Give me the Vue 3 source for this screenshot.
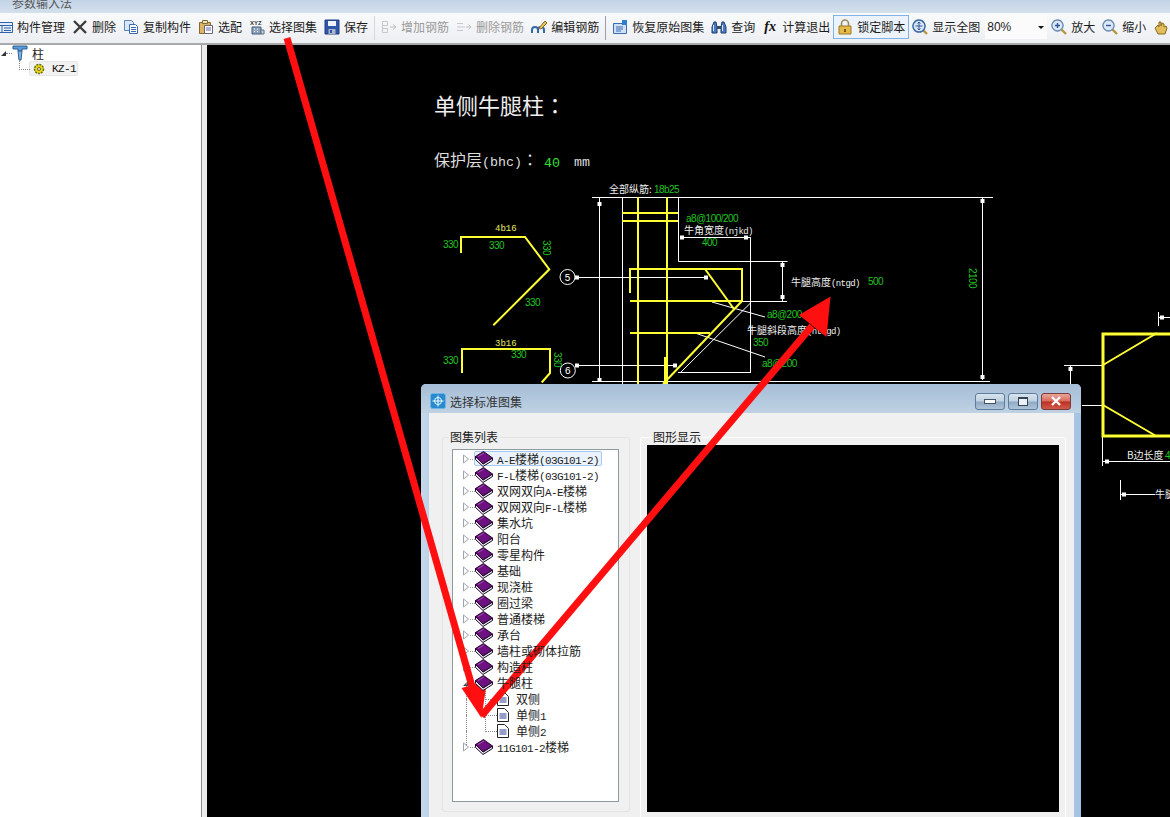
<script setup>
const blue = '#2f62a8'
const icons = {
  mgr: [{ d: 'M0.5 3.5h15v10h-15z', f: '#e4edf8', s: blue }, { d: 'M0.5 6.5h15M5 6.5v7M7 9h7M7 11.5h7', s: blue }],
  del: [{ d: 'M2 2L14 14M14 2L2 14', s: '#3c3c3c', w: 2.4 }],
  copy: [{ d: 'M1.5 1.5h7l2 2v8h-9z', f: '#dbe7f6', s: '#5b84bd' }, { d: 'M6.5 5.5h6l2 2v7h-8z', f: '#fff', s: '#3c6cb0' }, { d: 'M8 8.5h5M8 10.5h5M8 12.5h5', s: '#3c6cb0' }],
  match: [{ d: 'M1.5 3.5h11v11h-11z', f: '#d9b565', s: '#8a6a2a' }, { d: 'M4.5 1.5h5v3h-5z', f: '#efe3b8', s: '#7d6a35' }, { d: 'M6.5 6.5h8v8h-8z', f: '#fff', s: '#667' }, { d: 'M8 9h5M8 11h5', s: '#66a' }],
  xyz: [{ d: 'M3 8h9v7H3z', f: '#8ea3bd', s: '#4a5d78' }, { d: 'M5 10h1M8 10h1M5 12.500h1M8 12.500h1', s: '#fff' }, { d: 'M12 11h3v4h-3z', f: '#c7d3e2', s: '#5c6d85' }],
  save: [{ d: 'M1 1h14v14H1z', f: '#2f55a8', s: '#1e3c80' }, { d: 'M4 2h8v5H4z', f: '#eef3fb' }, { d: 'M4.500 10h7v5h-7z', f: '#aab6c8' }, { d: 'M6 11h2v3H6z', f: '#2f55a8' }],
  addbar: [{ d: 'M1.500 2.500h5v4h-5M1.500 9.500h5v4h-5M1.500 2.500v11', s: '#c8c8c8' }, { d: 'M9 8h6M12 5.500L15 8l-3 2.500', s: '#c0c0c0' }],
  delbar: [{ d: 'M1 4.500h6M1 8h8M1 11.500h6', s: '#c8c8c8' }, { d: 'M10 8h5M12.500 5.500L15 8l-2.500 2.500', s: '#c0c0c0' }],
  edit: [{ d: 'M1 14v-3q0-3 3-3t3 3v3M7 14v-3q0-3 3-3t3 3v3', s: '#3566a8', w: 2 }, { d: 'M8 9L14 2l2 2-6 6z', f: '#e9c452', s: '#8a6a20' }],
  restore: [{ d: 'M1.500 4.500h13v10h-13z', f: '#cfe0f4', s: '#3c6cb0' }, { d: 'M4 8h7M4 10h7M4 12h5', s: '#3c6cb0' }, { d: 'M10 1h5v5h-5z', f: '#2f7fd0' }],
  find: [{ d: 'M1 14V8l2-5h2l1 5v6zM10 14V8l1-5h2l2 5v6z', f: '#4a7cc6', s: '#1d3c75' }, { d: 'M6 7h4v3H6z', f: '#3a4a60' }, { d: 'M2.500 6v6M11.500 6v6', s: '#d6e6fa' }],
  lock: [{ d: 'M4.500 7V4.500a3.500 3.500 0 0 1 7 0V7', s: '#9a8a5a', w: 1.6 }, { d: 'M2 7h12v8H2z', f: '#e6b94a', s: '#9b7a24' }, { d: 'M7 10h2v3H7z', f: '#7a5c16' }],
  full: [{ d: 'M11 11l4 4', s: '#b8963c', w: 2.4 }, { d: 'M7 1a6 6 0 1 0 .01 0z', f: '#dbe8f7', s: '#3e6aa8', w: 1.5 }, { d: 'M7 3.500v7M3.500 7h7M5.500 4.500L7 3l1.500 1.500M5.500 9.500L7 11l1.500-1.500', s: '#2f55a0' }],
  zin: [{ d: 'M10.500 10.500l4.500 4.500', s: '#b8963c', w: 2.4 }, { d: 'M6.500 1a5.500 5.500 0 1 0 .01 0z', f: '#dbe8f7', s: '#6d8cb0', w: 1.4 }, { d: 'M4 6.500h5M6.500 4v5', s: '#2f55a0', w: 1.4 }],
  zout: [{ d: 'M10.500 10.500l4.500 4.500', s: '#b8963c', w: 2.4 }, { d: 'M6.500 1a5.500 5.500 0 1 0 .01 0z', f: '#dbe8f7', s: '#6d8cb0', w: 1.4 }, { d: 'M4 6.500h5', s: '#2f55a0', w: 1.4 }],
  pan: [{ d: 'M2 9l3-3 1 2V3h2v4l1-3 2 1v3l2-1 1 2-2 6H5z', f: '#e2bd5c', s: '#8a6a20' }]
}

const tools = [
  { icon: 'mgr', text: '构件管理', first: true },
  { icon: 'del', text: '删除' },
  { icon: 'copy', text: '复制构件' },
  { icon: 'match', text: '选配' },
  { icon: 'xyz', text: '选择图集', caption: 'XYZ' },
  { icon: 'save', text: '保存' },
  { sep: true },
  { icon: 'addbar', text: '增加钢筋', off: true },
  { icon: 'delbar', text: '删除钢筋', off: true },
  { icon: 'edit', text: '编辑钢筋' },
  { sep: true, dark: true },
  { icon: 'restore', text: '恢复原始图集' },
  { icon: 'find', text: '查询' },
  { text: '计算退出', fx: true },
  { icon: 'lock', text: '锁定脚本', active: true },
  { icon: 'full', text: '显示全图' },
  { combo: true },
  { icon: 'zin', text: '放大' },
  { icon: 'zout', text: '缩小' },
  { icon: 'pan', text: '' }
]

const rows = [
  { text: 'A-E楼梯(03G101-2)', sel: true },
  { text: 'F-L楼梯(03G101-2)' },
  { text: '双网双向A-E楼梯' },
  { text: '双网双向F-L楼梯' },
  { text: '集水坑' },
  { text: '阳台' },
  { text: '零星构件' },
  { text: '基础' },
  { text: '现浇桩' },
  { text: '圈过梁' },
  { text: '普通楼梯' },
  { text: '承台' },
  { text: '墙柱或砌体拉筋' },
  { text: '构造柱' },
  { text: '牛腿柱', open: true },
  { text: '双侧', child: true },
  { text: '单侧1', child: true },
  { text: '单侧2', child: true, last: true },
  { text: '11G101-2楼梯' }
]

const parts = s => s.split(/([\x00-\x7f]+)/).filter(Boolean).map(t => ({ t, latin: /^[\x00-\x7f]/.test(t) }))

const yellow = [
  'M461 253V237H525L549.300 269.300L493.300 325.300',
  'M462 373V349H550V373L541.700 382.500',
  'M638 197V385M667 197V385',
  'M622 213H678M622 221H678',
  'M630 293V269H742V301H630',
  'M705 269L734 309',
  'M630 333H710',
  'M742 301L663 384',
  'M665 357V385'
]
const white = [
  'M592 197.500H993',
  'M599.500 197V382',
  'M592 381.500H990',
  'M982.500 197V380',
  'M622.500 197V384M678.500 197V261.500H787.500',
  'M680 237.500H751M750.500 237V373M678 372.500H750.500M750.500 303L680 373',
  'M782.500 261V301M742 301.500H787',
  'M576 277.500H706M576 365.500H675',
  'M712 302L765 317M695 333L765 357',
  'M1064 365.500H1103M1070.500 365V385M1082 405.500H1103',
  'M1102.500 437V466M1103 461.500H1170',
  'M1158.500 312V326M1158 317.500H1170',
  'M1120.500 480V500M1120 494.500H1155'
]
const ticks = [
  [599.5, 204], [599.5, 380], [982.5, 201], [982.5, 377], [682, 237.5], [746, 237.5],
  [782.5, 265], [782.5, 297], [706, 277.5], [675, 365.5], [577, 277.5], [577, 365.5],
  [1070.5, 369], [1107, 461.5], [1162, 317.5], [1124, 494.5]
]
const green = [
  { x: 443, y: 248, t: '330' }, { x: 489, y: 249, t: '330' }, { x: 525, y: 306, t: '330' },
  { x: 443, y: 364, t: '330' }, { x: 511, y: 358, t: '330' },
  { x: 702, y: 246, t: '400' }, { x: 868, y: 285, t: '500' }, { x: 753, y: 346, t: '350' },
  { x: 654, y: 193, t: '18b25' }, { x: 686, y: 222, t: 'a8@100/200' },
  { x: 767, y: 318, t: 'a8@200' }, { x: 762, y: 367, t: 'a8@200' }, { x: 1165, y: 459, t: '4' }
]
const notes = [
  { x: 609, y: 193, cn: '全部纵筋:', en: '' },
  { x: 684, y: 233.500, cn: '牛角宽度', en: '(njkd)' },
  { x: 791, y: 286, cn: '牛腿高度', en: '(ntgd)' },
  { x: 747, y: 334, cn: '牛腿斜段高度', en: '(ntxgd)' },
  { x: 1127, y: 459, cn: 'B边长度', en: '' },
  { x: 1155, y: 498, cn: '牛腿', en: '' }
]
</script>

<template>
  <div class="page">
    <div class="titlebar"><span class="title-text">参数输入法</span></div>

    <div class="toolbar">
      <template v-for="(t, i) in tools" :key="i">
        <span v-if="t.sep" class="sep" :class="{ dark: t.dark }"></span>
        <div v-else-if="t.combo" class="combo"><span>80%</span><i class="combo-arrow"></i></div>
        <div v-else class="tool" :class="{ off: t.off, active: t.active, first: t.first }">
          <span v-if="t.fx" class="fx">fx</span>
          <svg v-else class="ico" viewBox="0 0 16 16" width="16" height="16">
            <text v-if="t.caption" x="1" y="6" class="xyz">{{ t.caption }}</text>
            <path v-for="(p, j) in icons[t.icon]" :key="j" :d="p.d" :fill="p.f || 'none'" :stroke="p.s || 'none'" :stroke-width="p.w || 1" />
          </svg>
          <span v-if="t.text">{{ t.text }}</span>
        </div>
      </template>
    </div>

    <div class="main">
      <aside class="side">
        <div class="side-row">
          <i class="side-exp"></i>
          <i class="side-dots"></i>
          <svg class="side-ico" viewBox="0 0 16 16" width="16" height="16">
            <path d="M1 1h14v3H10v2H6V4H1z" fill="#5b9bd5" stroke="#2b5f93" />
            <path d="M6 6h4l-1 9H7z" fill="#7fb4e2" stroke="#2b5f93" />
          </svg>
          <span class="side-text">柱</span>
        </div>
        <div class="side-child">
          <div class="side-sel">
            <svg viewBox="0 0 14 14" width="14" height="14">
              <circle cx="7" cy="7" r="4.500" fill="#e8d71a" stroke="#6a6a10" stroke-width="1.500" stroke-dasharray="2 1" />
              <circle cx="7" cy="7" r="1.500" fill="#fff" stroke="#6a6a10" />
            </svg>
            <span class="kz">KZ-1</span>
          </div>
        </div>
      </aside>
      <div class="split"></div>

      <div class="canvas">
        <svg class="cad" viewBox="207 45 963 772" width="963" height="772">
          <text x="434" y="114" class="h1">单侧牛腿柱<tspan class="tc">：</tspan></text>
          <text x="434" y="166" class="h2">保护层<tspan class="h2en">(bhc)</tspan><tspan class="tc">：</tspan></text>
          <text x="544" y="167" class="h2g">40</text>
          <text x="574" y="166" class="h2en">mm</text>

          <path v-for="(d, i) in white" :key="'w' + i" :d="d" class="ln-w" />
          <path v-for="(d, i) in yellow" :key="'y' + i" :d="d" class="ln-y" />
          <rect x="1103" y="334" width="80" height="102" class="ln-y thick" />
          <path d="M1103 365L1157 333M1103 405L1157 436.500" class="ln-y" />
          <rect v-for="(p, i) in ticks" :key="'t' + i" :x="p[0] - 2" :y="p[1] - 2" width="4" height="4" fill="#fff" />

          <circle cx="567.500" cy="277" r="7.500" class="ring" />
          <circle cx="567.800" cy="370.500" r="7.500" class="ring" />
          <text x="567.500" y="280.500" class="ring-t">5</text>
          <text x="567.800" y="374" class="ring-t">6</text>

          <text x="495" y="231" class="lab-y">4b16</text>
          <text x="495" y="346" class="lab-y">3b16</text>
          <text v-for="(g, i) in green" :key="'g' + i" :x="g.x" :y="g.y" class="lab-g">{{ g.t }}</text>
          <text class="lab-g" transform="translate(543 240) rotate(90)">330</text>
          <text class="lab-g" transform="translate(554 352) rotate(90)">330</text>
          <text class="lab-g" transform="translate(969 268) rotate(90)">2100</text>
          <text v-for="(n, i) in notes" :key="'n' + i" :x="n.x" :y="n.y" class="note">{{ n.cn }}<tspan class="note-en">{{ n.en }}</tspan></text>
        </svg>

        <section class="dialog">
          <header class="dlg-head">
            <svg class="dlg-ico" viewBox="0 0 16 16" width="16" height="16">
              <rect x="0.500" y="0.500" width="15" height="15" rx="2" fill="#2a8ad0" stroke="#6fb6e6" />
              <path d="M8 2.500v11M2.500 8h11" stroke="#fff" />
              <circle cx="8" cy="8" r="3.500" fill="none" stroke="#dff" />
            </svg>
            <span class="dlg-title">选择标准图集</span>
            <div class="dlg-btns">
              <button class="wbtn"><i class="g-min"></i></button>
              <button class="wbtn"><i class="g-max"></i></button>
              <button class="wbtn close">
                <svg viewBox="0 0 12 10" width="12" height="10"><path d="M2 1l8 8M10 1L2 9" stroke="#fff" stroke-width="2.400" /></svg>
              </button>
            </div>
          </header>

          <div class="dlg-body">
            <div class="group g1">
              <span class="legend l1">图集列表</span>
              <div class="tree">
                <div v-for="(r, i) in rows" :key="i" class="row" :class="{ child: r.child, sel: r.sel, thru: r.open || r.child }">
                  <template v-if="!r.child">
                    <svg class="exp" viewBox="0 0 8 10" width="8" height="10">
                      <path v-if="r.open" d="M7 2v6H1z" fill="#444" />
                      <path v-else d="M1.500 1l5 4-5 4z" fill="#fff" stroke="#9aa4ad" />
                    </svg>
                    <i class="dots"></i>
                    <svg class="book" viewBox="0 0 18 16" width="18" height="16">
                      <path d="M.5 5.500v3l7.500 7 9.500-6V7l-9.500 6z" fill="#e6e6ee" stroke="#1e0a24" />
                      <path d="M.5 5.500L8.500.500 17.500 7 8 13z" fill="#6d1180" stroke="#1e0a24" />
                      <path d="M3 5.500l6-3.500" stroke="#a84cc0" />
                    </svg>
                  </template>
                  <svg v-else class="doc" viewBox="0 0 12 14" width="12" height="14">
                    <path d="M.5.500h7l4 4v9H.500z" fill="#fff" stroke="#222" />
                    <path d="M2.500 6h7M2.500 8h7M2.500 10h7" stroke="#2a3a90" />
                  </svg>
                  <span class="label">
                    <span v-for="(p, k) in parts(r.text)" :key="k" :class="{ latin: p.latin }">{{ p.t }}</span>
                  </span>
                </div>
              </div>
            </div>
            <div class="group g2">
              <span class="legend l2">图形显示</span>
              <div class="preview"></div>
            </div>
          </div>
        </section>
      </div>
    </div>

    <svg class="marks" viewBox="0 0 1170 817" width="1170" height="817">
      <path d="M287 38L477 704" stroke="#ff0f0f" stroke-width="7" fill="none" />
      <path d="M481.500 718L461.500 688L487 681z" fill="#ff0f0f" />
      <path d="M481.500 716L812 326" stroke="#ff0f0f" stroke-width="7" fill="none" />
      <path d="M830.500 296.500L799 315L826.500 337z" fill="#ff0f0f" />
    </svg>
  </div>
</template>

<style scoped>
.page {
  position: relative;
  width: 1170px;
  height: 817px;
  overflow: hidden;
  display: flex;
  flex-direction: column;
  background: #f0f0f0;
  font-family: "Noto Sans CJK SC", "Liberation Sans", sans-serif;
  font-size: 12px;
  color: #1c1c1c;
}
.titlebar {
  height: 13px;
  flex: none;
  overflow: hidden;
  background: linear-gradient(#c3d4e6, #d4e0ec);
  padding-left: 12px;
  line-height: 6px;
  color: #555;
}
.title-text { display: block; }
.toolbar {
  height: 30px;
  flex: none;
  box-sizing: content-box;
  display: flex;
  align-items: center;
  gap: 7px;
  background: linear-gradient(#f9fafb, #eceef2);
  border-bottom: 2px solid #a9a9a9;
  white-space: nowrap;
}
.tool { display: flex; align-items: center; gap: 4px; flex: none; line-height: 16px; position: relative; top: -1px; }
.tool.first { margin-left: -3px; }
.tool.off { color: #9a9a9a; }
.tool.active {
  height: 22px;
  margin: 0 -4px;
  padding: 0 3px;
  border: 1px solid #7fb2e6;
  background: #edf3fa;
}
.ico { flex: none; display: block; }
.xyz { font-size: 6px; font-family: "Liberation Sans", sans-serif; font-weight: 700; fill: #333; }
.fx {
  width: 16px;
  text-align: center;
  font: italic 700 14px "Liberation Serif", serif;
  color: #111;
}
.sep { flex: none; width: 1px; height: 24px; margin: 0 -1px; background: #d5d7da; }
.sep.dark { background: #9a9da2; }
.combo {
  flex: none;
  width: 62px;
  height: 24px;
  margin: 0 -3px 0 -2px;
  padding-left: 2px;
  box-sizing: border-box;
  display: flex;
  align-items: center;
  justify-content: space-between;
  background: #fbfbfb;
  font-family: "Liberation Sans", sans-serif;
  font-size: 12px;
  position: relative;
  top: -1px;
}
.combo-arrow {
  margin-right: 3px;
  border-left: 3px solid transparent;
  border-right: 3px solid transparent;
  border-top: 3px solid #111;
}

.main { flex: 1; min-height: 0; display: flex; }
.side {
  width: 201px;
  flex: none;
  background: #fff;
  border-right: 1px solid #8f8f8f;
}
.side-row { display: flex; align-items: center; height: 16px; }
.side-exp {
  width: 0;
  height: 0;
  margin-left: 1px;
  border-left: 5px solid transparent;
  border-bottom: 5px solid #333;
}
.side-dots { width: 6px; margin-right: 0; border-top: 1px dotted #888; }
.side-ico { flex: none; }
.side-text { margin-left: 4px; }
.side-child {
  position: relative;
  margin: 0 0 0 29px;
}
.side-child::before {
  content: "";
  position: absolute;
  left: -10px;
  top: -1px;
  width: 10px;
  height: 9px;
  border-left: 1px dotted #888;
  border-bottom: 1px dotted #888;
}
.side-sel {
  display: flex;
  align-items: center;
  width: 49px;
  height: 15px;
  box-sizing: border-box;
  padding-left: 2px;
  gap: 6px;
  background: #f2f2f2;
  border-radius: 2px;
  border: 1px solid #e6e6e6;
}
.kz { font: 11px "Liberation Mono", monospace; letter-spacing: -0.6px; color: #111; }
.split { width: 5px; flex: none; background: #ededed; }

.canvas { position: relative; flex: 1; min-width: 0; background: #000; overflow: hidden; }
.cad { display: block; }
.h1 { font-size: 22px; fill: #eee; }
.h2 { font-size: 16px; fill: #ddd; }
.tc { font-family: "Noto Sans CJK TC", sans-serif; }
.h2en { font-size: 13.300px; fill: #ddd; font-family: "Liberation Mono", monospace; }
.h2g { font-size: 13.300px; fill: #33e033; font-family: "Liberation Mono", monospace; }
.ln-y { stroke: #ffff33; stroke-width: 2; fill: none; }
.ln-y.thick { stroke-width: 3; }
.ln-w { stroke: #fff; stroke-width: 1; fill: none; }
.ring { fill: #000; stroke: #fff; stroke-width: 1; }
.ring-t { font: 10px "Liberation Mono", monospace; fill: #fff; text-anchor: middle; }
.lab-y { font: 9px "Liberation Mono", monospace; fill: #e8e860; }
.lab-g { font: 10px "Liberation Sans", sans-serif; letter-spacing: -0.55px; fill: #22c422; }
.note { font-size: 10px; fill: #eee; }
.note-en { font: 9px "Liberation Mono", monospace; letter-spacing: -0.6px; fill: #eee; }

.dialog {
  position: absolute;
  left: 214px;
  top: 339px;
  width: 660px;
  height: 520px;
  box-sizing: border-box;
  display: flex;
  flex-direction: column;
  padding: 0 7px 0 8px;
  border-radius: 5px 5px 0 0;
  background: linear-gradient(90deg, #c6d8ea, #a9c4e0 4%, #b9d0e6 96%, #a3c2e2);
}
.dlg-head {
  height: 29px;
  flex: none;
  box-sizing: border-box;
  display: flex;
  align-items: center;
  background: linear-gradient(#a5bdd6, #bfd2e4);
  margin: 0 -7px 0 -8px;
  padding: 5px 10px 0 9px;
  border-radius: 5px 5px 0 0;
}
.dlg-ico { flex: none; margin-right: 4px; }
.dlg-title { color: #333; flex: 1; }
.dlg-btns { display: flex; gap: 3px; }
.wbtn {
  width: 30px;
  height: 17px;
  padding: 0;
  display: flex;
  align-items: center;
  justify-content: center;
  border: 1px solid #5d7d9c;
  border-radius: 3px;
  background: linear-gradient(#d7e3ee 0, #c0d1e1 48%, #8fa9c3 52%, #aec3d8 100%);
}
.wbtn.close { border-color: #7a3a3a; background: linear-gradient(#e8a69a 0, #d96a5a 48%, #bc2f22 52%, #cf5b4a 100%); }
.g-min { width: 10px; height: 3px; border: 1px solid #456; background: #fff; }
.g-max { width: 8px; height: 6px; border: 1px solid #345; border-top-width: 2px; background: #e9f0f6; }
.dlg-body { flex: 1; min-height: 0; display: flex; background: #f0f0f0; padding: 24px 8px 0 13px; gap: 10px; align-items: flex-start; }
.group { position: relative; box-sizing: border-box; border: 1px solid #e4e4e4; border-radius: 2px; }
.legend { position: absolute; top: -9px; line-height: 16px; padding: 0 1px; background: #f0f0f0; color: #222; }
.l1 { left: 6px; }
.l2 { left: 11px; }
.g1 { width: 188px; height: 375px; padding: 11px 10px 0 9px; }
.g2 { width: 426px; height: 386px; padding: 7px 6px 0 6px; border-color: #fff; }
.tree { height: 353px; box-sizing: border-box; background: #fff; border: 1px solid #8f9aa0; padding-top: 1px; }
.row { position: relative; height: 16px; display: flex; align-items: center; padding-left: 9px; }
.exp { flex: none; }
.dots { width: 5px; height: 0; border-top: 1px dotted #999; flex: none; }
.book { flex: none; position: relative; z-index: 1; }
.label { position: relative; z-index: 1; margin-left: 4px; line-height: 16px; white-space: nowrap; }
.row.sel::after {
  content: "";
  position: absolute;
  left: 21px;
  top: 0;
  width: 128px;
  height: 15px;
  box-sizing: border-box;
  border: 1px solid #a9c9ec;
  border-radius: 2px;
  background: #eaf3fd;
}
.latin { font: 11px "Liberation Mono", monospace; letter-spacing: -0.6px; }
.row.child { padding-left: 44px; }
.row.child .label { margin-left: 7px; }
.doc { flex: none; }
.row.thru::before { content: ""; position: absolute; left: 13px; top: 8px; height: 16px; border-left: 1px dotted #8a8a8a; }
.row.child::after { content: ""; position: absolute; left: 32px; top: -8px; width: 11px; height: 16px; border-left: 1px dotted #8a8a8a; border-bottom: 1px dotted #8a8a8a; }
.preview { height: 367px; background: #000; }

.marks { position: absolute; left: 0; top: 0; pointer-events: none; }
</style>
